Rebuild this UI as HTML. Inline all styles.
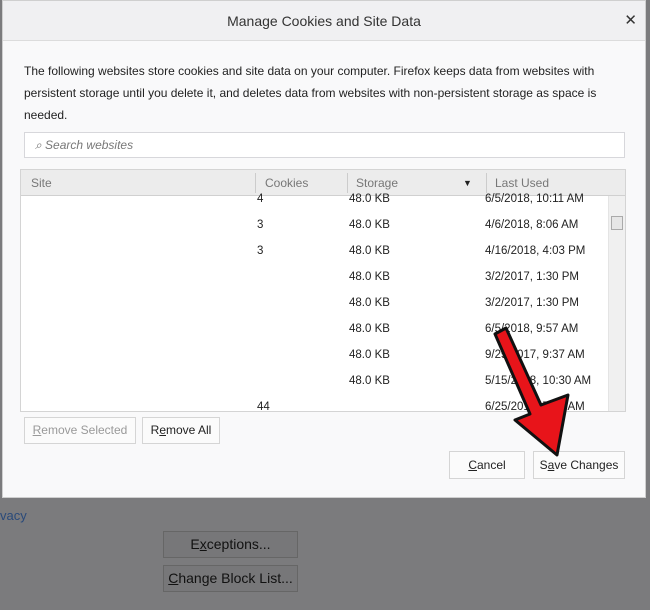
<!DOCTYPE html>
<html><head><style>
*{box-sizing:border-box;margin:0;padding:0}
body{width:650px;height:610px;background:#7b7b7d;font-family:"Liberation Sans",sans-serif;position:relative;overflow:hidden;color:#222}
.dlg{position:absolute;left:2px;top:0;width:644px;height:498px;background:#f9f9fa;border:1px solid #cfcfcf}
.title{height:40px;background:#f0f0f2;border-bottom:1px solid #dcdcdc;text-align:center;line-height:40px;font-size:14px;color:#333}
.x{position:absolute;right:8px;top:0;line-height:40px;font-size:15px;color:#333}
.desc{position:absolute;left:21px;top:59px;width:590px;font-size:12px;line-height:22px;color:#222}
.search{position:absolute;left:21px;top:131px;width:601px;height:26px;background:#fff;border:1px solid #d7d7db;font-size:12px;font-style:italic;color:#777;line-height:24px;padding-left:10px}
.tbl{position:absolute;left:17px;top:168px;width:606px;height:243px;border:1px solid #d4d4d4;background:#fff;overflow:hidden}
.hd{height:26px;background:#ececec;border-bottom:1px solid #d0d0d0;position:relative;font-size:12px;color:#777}
.hd span{position:absolute;top:6px}
.sep{position:absolute;top:3px;width:1px;height:20px;background:#ccc}
.c{position:absolute;font-size:11.5px;color:#222}
.sb{position:absolute;right:0;top:26px;width:17px;height:216px;background:#f0f0f0;border-left:1px solid #e4e4e4}
.btn{position:absolute;background:#fbfbfb;border:1px solid #d5d5d5;font-size:12px;text-align:center;color:#222}
.gbtn{position:absolute;background:#777779;border:1px solid #666;font-size:14px;text-align:center;color:#111}
</style></head><body>
<div style="position:absolute;left:0;top:508px;font-size:13px;color:#2a4a7a">vacy</div>
<div class="gbtn" style="left:163px;top:531px;width:135px;height:27px;line-height:25px">E<u>x</u>ceptions...</div>
<div class="gbtn" style="left:163px;top:565px;width:135px;height:27px;line-height:25px"><u>C</u>hange Block List...</div>
<div class="dlg">
<div class="title">Manage Cookies and Site Data</div>
<div class="x">✕</div>
<div class="desc">The following websites store cookies and site data on your computer. Firefox keeps data from websites with<br>persistent storage until you delete it, and deletes data from websites with non-persistent storage as space is<br>needed.</div>
<div class="search">⌕ Search websites</div>
<div class="tbl">
<div class="hd"><span style="left:10px">Site</span><div class="sep" style="left:234px"></div><span style="left:244px">Cookies</span><div class="sep" style="left:326px"></div><span style="left:335px">Storage</span><span style="left:442px;font-size:9px;top:8px;color:#222">▼</span><div class="sep" style="left:465px"></div><span style="left:474px">Last Used</span></div>
<div class="c" style="left:236px;top:23px">4</div><div class="c" style="left:328px;top:23px">48.0 KB</div><div class="c" style="left:464px;top:23px">6/5/2018, 10:11 AM</div>
<div class="c" style="left:236px;top:49px">3</div><div class="c" style="left:328px;top:49px">48.0 KB</div><div class="c" style="left:464px;top:49px">4/6/2018, 8:06 AM</div>
<div class="c" style="left:236px;top:75px">3</div><div class="c" style="left:328px;top:75px">48.0 KB</div><div class="c" style="left:464px;top:75px">4/16/2018, 4:03 PM</div>
<div class="c" style="left:328px;top:101px">48.0 KB</div><div class="c" style="left:464px;top:101px">3/2/2017, 1:30 PM</div>
<div class="c" style="left:328px;top:127px">48.0 KB</div><div class="c" style="left:464px;top:127px">3/2/2017, 1:30 PM</div>
<div class="c" style="left:328px;top:153px">48.0 KB</div><div class="c" style="left:464px;top:153px">6/5/2018, 9:57 AM</div>
<div class="c" style="left:328px;top:179px">48.0 KB</div><div class="c" style="left:464px;top:179px">9/25/2017, 9:37 AM</div>
<div class="c" style="left:328px;top:205px">48.0 KB</div><div class="c" style="left:464px;top:205px">5/15/2018, 10:30 AM</div>
<div class="c" style="left:236px;top:231px">44</div><div class="c" style="left:464px;top:231px">6/25/2018, 7:44 AM</div>
<div class="sb"><div style="position:absolute;left:2px;top:20px;width:12px;height:14px;background:#e6e6e6;border:1px solid #aaa"></div></div>
</div>
<div class="btn" style="left:21px;top:416px;width:112px;height:27px;line-height:25px;color:#999"><u>R</u>emove Selected</div>
<div class="btn" style="left:139px;top:416px;width:78px;height:27px;line-height:25px">R<u>e</u>move All</div>
<div class="btn" style="left:446px;top:450px;width:76px;height:28px;line-height:26px"><u>C</u>ancel</div>
<div class="btn" style="left:530px;top:450px;width:92px;height:28px;line-height:26px">S<u>a</u>ve Changes</div>
</div>
<svg style="position:absolute;left:0;top:0" width="650" height="610">
<polygon points="495,334 506,328 541,405 568,395 557,455 515,420 530,414" fill="#e8141a" stroke="#111" stroke-width="3" stroke-linejoin="round"/>
</svg>
</body></html>
